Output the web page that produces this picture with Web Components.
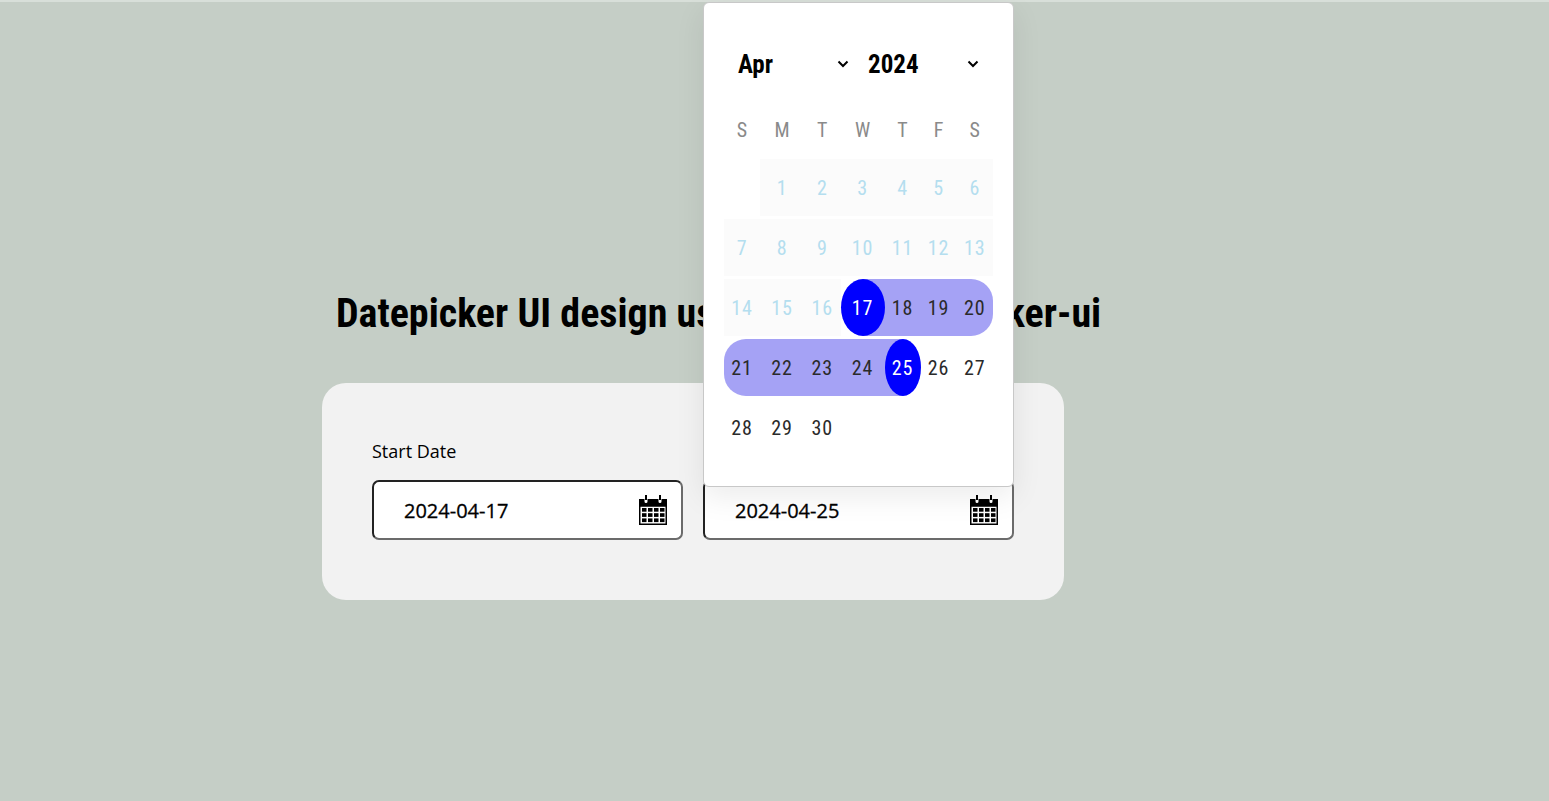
<!DOCTYPE html>
<html>
<head>
<meta charset="utf-8">
<title>Datepicker</title>
<style>
  html, body { margin: 0; height: 100%; }
  body { background: #c5cec6; overflow: hidden; font-family: "Open Sans", sans-serif; }
</style>
</head>
<body>
<date-page></date-page>

<template id="date-page-tpl">
  <style>
    :host {
      display: flex;
      flex-direction: column;
      align-items: flex-start;
      height: 801px;
      box-sizing: border-box;
      padding: 290px 0 0 322px;
      border-top: 2px solid #d8dfd9;
    }
    h1 {
      margin: 0 0 47px 14px;
      font: 700 40px/44px Roboto, sans-serif;
      font-stretch: condensed;
      color: #000;
      white-space: nowrap;
    }
    /* this gap sits behind the popup */
    h1 span { word-spacing: 18px; }
    .card {
      position: relative;
      display: flex;
      gap: 20px;
      width: 742px;
      height: 217px;
      box-sizing: border-box;
      padding: 56px 50px 0;
      border-radius: 24px;
      background: #f2f2f2;
    }
  </style>
  <h1>Datepicker UI design <span>using react</span>-datepicker-ui</h1>
  <div class="card">
    <date-field label="Start Date" value="2024-04-17"></date-field>
    <date-field label="End Date" value="2024-04-25" open></date-field>
  </div>
</template>

<template id="date-field-tpl">
  <style>
    :host { display: block; position: relative; width: 311px; }
    label { display: block; font: 400 18px/24px "Open Sans", sans-serif; color: #000; margin-bottom: 17px; }
    .box {
      display: flex;
      align-items: center;
      justify-content: space-between;
      box-sizing: border-box;
      height: 60px;
      padding: 0 14px 0 30px;
      background: #fff;
      border: 2px solid;
      border-color: #222 #6b6b6b #6b6b6b #222;
      border-radius: 7px;
      font: 500 20px/26px "Open Sans", sans-serif;
      -webkit-text-stroke: .3px #000;
      color: #000;
    }
    .val { padding-top: 1px; }
    svg { display: block; width: 28px; height: 30px; }
  </style>
  <label></label>
  <div class="box">
    <span class="val"></span>
    <svg viewBox="0 0 28 30">
      <path d="M0 4h5.500v2.500a1.500 1.500 0 0 0 3 0V4h11v2.500a1.500 1.500 0 0 0 3 0V4H28v7.500H0z" fill="#000"/>
      <rect x="6" y="0" width="2" height="5" fill="#000"/>
      <rect x="20" y="0" width="2" height="5" fill="#000"/>
      <rect x="0.750" y="11" width="26.500" height="18.250" fill="#fff" stroke="#000" stroke-width="1.500"/>
      <g fill="#000">
        <rect x="3" y="13" width="4.500" height="3.700"/><rect x="9" y="13" width="4.500" height="3.700"/><rect x="15" y="13" width="4.500" height="3.700"/><rect x="21" y="13" width="4.500" height="3.700"/>
        <rect x="3" y="18.200" width="4.500" height="3.700"/><rect x="9" y="18.200" width="4.500" height="3.700"/><rect x="15" y="18.200" width="4.500" height="3.700"/><rect x="21" y="18.200" width="4.500" height="3.700"/>
        <rect x="3" y="23.400" width="4.500" height="3.700"/><rect x="9" y="23.400" width="4.500" height="3.700"/><rect x="15" y="23.400" width="4.500" height="3.700"/><rect x="21" y="23.400" width="4.500" height="3.700"/>
      </g>
    </svg>
  </div>
</template>

<template id="cal-popup-tpl">
  <style>
    :host {
      position: absolute;
      left: 0;
      bottom: 113px;
      z-index: 10;
      display: block;
      box-sizing: border-box;
      width: 311px;
      height: 485px;
      padding: 0 20px;
      background: #fff;
      border: 1px solid #c8c8c8;
      border-radius: 6px;
      box-shadow: 0 10px 30px rgba(0, 0, 0, .08);
      font-family: Roboto, sans-serif;
      font-stretch: condensed;
    }
    .head { display: flex; height: 109px; padding-top: 45px; box-sizing: border-box; }
    .sel {
      display: flex;
      align-items: center;
      justify-content: space-between;
      height: 32px;
      font-weight: 700;
      font-size: 25px;
      color: #000;
      box-sizing: border-box;
    }
    .sel.m { width: 134px; padding: 0 9px 0 14px; }
    .sel.y { width: 134px; padding: 0 13px 0 10px; }
    .sel svg { width: 12px; height: 8px; display: block; }
    .grid {
      display: grid;
      grid-template-columns: 36px 44px 36.500px 44px 36px 36px 36.500px;
      grid-auto-rows: 57px;
      row-gap: 3px;
    }
    .dow {
      display: flex;
      align-items: center;
      justify-content: center;
      font-size: 20px;
      font-weight: 400;
      color: #8a8a8a;
    }
    .grid.dows { grid-auto-rows: 36px; }
    .grid.days { margin-top: 11px; }
    .c {
      position: relative;
      display: flex;
      align-items: center;
      justify-content: center;
      font-size: 20px;
      letter-spacing: .8px;
      color: #2a2a2a;
    }
    .c.off { background: #fbfbfb; color: #b4deef; }
    .c.in { background: #a5a2f5; }
    .c.first-r { border-radius: 22px 0 0 22px; }
    .c.last-r { border-radius: 0 22px 22px 0; }
    .c.sel-d { color: #fff; background: transparent; z-index: 0; }
    .c.sel-d::before {
      content: "";
      position: absolute;
      inset: 0;
      z-index: -2;
    }
    .c.sel-d::after {
      content: "";
      position: absolute;
      inset: 0;
      z-index: -1;
      background: #0000ff;
      border-radius: 50%;
    }
    .c.sel-d.start::before { left: 50%; background: #a5a2f5; }
    .c.sel-d.end::before { right: 50%; background: #a5a2f5; }
  </style>
  <div class="head">
    <div class="sel m"><span>Apr</span><svg viewBox="0 0 12 8"><path d="M1.500 1.500 6 6l4.500-4.500" fill="none" stroke="#000" stroke-width="2"/></svg></div>
    <div class="sel y"><span>2024</span><svg viewBox="0 0 12 8"><path d="M1.500 1.500 6 6l4.500-4.500" fill="none" stroke="#000" stroke-width="2"/></svg></div>
  </div>
  <div class="grid dows"></div>
  <div class="grid days"></div>
</template>

<script>
function stamp(el, id) {
  const root = el.attachShadow({ mode: 'open' });
  root.appendChild(document.getElementById(id).content.cloneNode(true));
  return root;
}

class DatePage extends HTMLElement {
  constructor() {
    super();
    stamp(this, 'date-page-tpl');
  }
}

class DateField extends HTMLElement {
  constructor() {
    super();
    stamp(this, 'date-field-tpl');
  }

  connectedCallback() {
    const root = this.shadowRoot;
    root.querySelector('label').textContent = this.getAttribute('label');
    root.querySelector('.val').textContent = this.getAttribute('value');
    if (this.hasAttribute('open')) {
      root.appendChild(document.createElement('cal-popup'));
    }
  }
}

class CalPopup extends HTMLElement {
  constructor() {
    super();
    stamp(this, 'cal-popup-tpl');
  }

  connectedCallback() {
    const root = this.shadowRoot;
    const dows = root.querySelector('.dows');
    ['S', 'M', 'T', 'W', 'T', 'F', 'S'].forEach(d => {
      const el = document.createElement('div');
      el.className = 'dow';
      el.textContent = d;
      dows.appendChild(el);
    });

    const days = root.querySelector('.days');
    days.appendChild(document.createElement('div'));
    for (let d = 1; d <= 30; d++) {
      const el = document.createElement('div');
      el.textContent = d;
      let cls = 'c';
      if (d < 17) cls += ' off';
      else if (d === 17) cls += ' sel-d start';
      else if (d === 25) cls += ' sel-d end';
      else if (d < 25) cls += ' in';
      if (d === 20) cls += ' last-r';
      if (d === 21) cls += ' first-r';
      el.className = cls;
      days.appendChild(el);
    }
  }
}

customElements.define('date-page', DatePage);
customElements.define('date-field', DateField);
customElements.define('cal-popup', CalPopup);
</script>
</body>
</html>
